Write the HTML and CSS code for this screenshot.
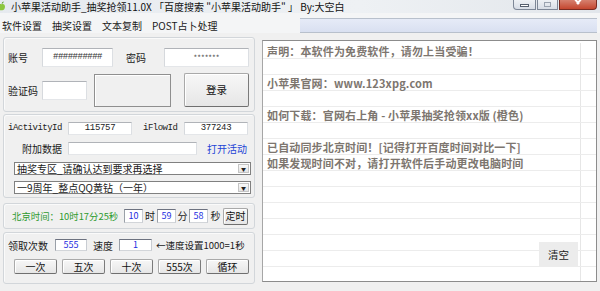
FILE: index.html
```html
<!DOCTYPE html>
<html lang="zh-CN">
<head>
  <meta charset="UTF-8">
  <title>小苹果活动助手</title>
  <link rel="stylesheet" href="styles.css">
</head>
<body>
  <!-- 标题栏 -->
  <div class="titlebar">
    <svg class="app-icon" width="7" height="10" viewBox="0 0 7 10">
      <path d="M3.5 3.2 C1.2 2.2 0 3.8 0 5.8 C0 8 1.5 9.8 3.5 9.2 C5.5 9.8 7 8 7 5.8 C7 3.8 5.8 2.2 3.5 3.2 Z" fill="#8cc63f"/>
      <path d="M3.6 3 C3.8 1.6 4.6 0.8 5.8 0.6 C5.6 1.8 4.8 2.7 3.6 3 Z" fill="#5a9e2a"/>
    </svg>
    <span class="title-text">小苹果活动助手_抽奖抢领11.0X 「百度搜索 "小苹果活动助手" 」 By:大空白</span>
    <div class="win-btns">
      <span class="win-btn btn-min"><i></i></span>
      <span class="win-btn btn-max"><i></i></span>
      <span class="win-btn btn-close">
        <svg width="10" height="6" viewBox="0 0 10 6">
          <path d="M1 -2 L6 4 M9 -2 L4 4" stroke="#fff" stroke-width="2"/>
        </svg>
      </span>
    </div>
  </div>

  <!-- 菜单 -->
  <div class="menubar">
    <span class="menu-item">软件设置</span>
    <span class="menu-item">抽奖设置</span>
    <span class="menu-item">文本复制</span>
    <span class="menu-item">POST占卜处理</span>
    <div class="menu-space"></div>
    <div class="menu-band"></div>
  </div>

  <div class="main">
    <div class="left">
      <!-- 登录 -->
      <div class="group g-login">
        <div class="row">
          <span class="lbl w34">账号</span>
          <div class="tb tb-user">##########</div>
          <span class="lbl lbl-pass">密码</span>
          <div class="tb tb-pass">*******</div>
        </div>
        <div class="row row-code">
          <span class="lbl w34">验证码</span>
          <div class="tb tb-code"></div>
          <div class="code-img"></div>
          <div class="btn btn-login">登录</div>
        </div>
      </div>

      <!-- 活动参数 -->
      <div class="group g-act">
        <div class="row h13">
          <span class="mono w60">iActivityId</span>
          <div class="tb tb-small">115757</div>
          <span class="mono lbl-flow">iFlowId</span>
          <div class="tb tb-small">377243</div>
        </div>
        <div class="row h13 mt7">
          <span class="lbl w60 right">附加数据</span>
          <div class="tb tb-extra"></div>
          <span class="link">打开活动</span>
        </div>
        <div class="combo mt7">
          <span class="combo-text">抽奖专区_请确认达到要求再选择</span>
          <span class="combo-arrow">▼</span>
        </div>
        <div class="combo mt6">
          <span class="combo-text">一9周年_整点QQ黄钻（一年）</span>
          <span class="combo-arrow">▼</span>
        </div>
      </div>

      <!-- 定时 -->
      <div class="group g-time">
        <span class="bj-time">北京时间：10时17分25秒</span>
        <div class="tb tb-num">10</div>
        <span class="unit w14">时</span>
        <div class="tb tb-num">59</div>
        <span class="unit w13">分</span>
        <div class="tb tb-num">58</div>
        <span class="unit w15">秒</span>
        <div class="btn btn-timer">定时</div>
      </div>

      <!-- 领取 -->
      <div class="group g-get">
        <div class="row h12">
          <span class="lbl w47">领取次数</span>
          <div class="tb tb-count">555</div>
          <span class="lbl w32 center">速度</span>
          <div class="tb tb-speed">1</div>
          <span class="lbl hint">←速度设置1000=1秒</span>
        </div>
        <div class="btn-row">
          <div class="btn btn-act">一次</div>
          <div class="btn btn-act">五次</div>
          <div class="btn btn-act">十次</div>
          <div class="btn btn-act">555次</div>
          <div class="btn btn-act">循环</div>
        </div>
      </div>
    </div>

    <!-- 日志 -->
    <div class="log">
      <div class="log-row"><span class="cell">声明：本软件为免费软件，请勿上当受骗！</span></div>
      <div class="log-row"><span class="cell"></span></div>
      <div class="log-row"><span class="cell">小苹果官网：www.123xpg.com</span></div>
      <div class="log-row"><span class="cell"></span></div>
      <div class="log-row"><span class="cell">如何下载：官网右上角 - 小苹果抽奖抢领xx版 (橙色)</span></div>
      <div class="log-row"><span class="cell"></span></div>
      <div class="log-row"><span class="cell">已自动同步北京时间！[记得打开百度时间对比一下]</span></div>
      <div class="log-row"><span class="cell">如果发现时间不对，请打开软件后手动更改电脑时间</span></div>
      <div class="log-row"><span class="cell"></span></div>
      <div class="log-row"><span class="cell"></span></div>
      <div class="log-row"><span class="cell"></span></div>
      <div class="log-row"><span class="cell"></span></div>
      <div class="log-row"><span class="cell"></span></div>
      <div class="log-row"><span class="cell"></span></div>
      <div class="log-row"><span class="cell"></span></div>
      <div class="clear-btn">清空</div>
    </div>
  </div>
</body>
</html>
```

FILE: styles.css
```css
* {
  box-sizing: border-box;
}

body {
  margin: 0;
  width: 600px;
  height: 291px;
  overflow: hidden;
  background: #f0f0f0;
  font-family: "Noto Sans CJK SC", "Noto Sans", sans-serif;
  font-size: 10px;
  color: #1a1a1a;
}

/* 标题栏 */
.titlebar {
  height: 13px;
  display: flex;
  align-items: flex-start;
  background: linear-gradient(to right, #e6eaef, #eef1f4 60%, #e2e6eb);
}

.app-icon {
  margin: 1px 6px 0 -2px;
}

.title-text {
  font-size: 10px;
  line-height: 13px;
  color: #111;
  white-space: nowrap;
}

.win-btns {
  margin-left: auto;
  margin-right: 3px;
  display: flex;
  gap: 1px;
}

.win-btn {
  height: 10px;
  border: 1px solid #7d8797;
  border-top: none;
  background: linear-gradient(#eef1f5, #d7dde6);
  display: flex;
  justify-content: center;
  align-items: flex-end;
}

.btn-min {
  width: 23px;
  border-radius: 0 0 0 4px;
}

.btn-min i {
  width: 9px;
  height: 3px;
  margin-bottom: 2px;
  border: 1px solid #555f6e;
  background: #fff;
}

.btn-max {
  width: 21px;
}

.btn-max i {
  width: 7px;
  height: 5px;
  margin-bottom: 2px;
  border: 1px solid #9aa3b0;
}

.btn-close {
  width: 38px;
  border-color: #7a2c22;
  border-radius: 0 0 4px 0;
  background: linear-gradient(#d6816f, #c4462f);
  align-items: flex-start;
}

/* 菜单 */
.menubar {
  height: 20px;
  display: flex;
  align-items: flex-start;
  padding-left: 2px;
  background: #f4f5f6;
}

.menu-item {
  margin-right: 10px;
  margin-top: 6px;
  font-size: 10px;
  line-height: 13px;
  white-space: nowrap;
}

.menu-space {
  flex: 1;
}

.menu-band {
  width: 297px;
  height: 15px;
  margin-top: 5px;
  margin-right: 3px;
  border-top: 1px solid #b8c0cc;
  border-bottom: 1px solid #b8c0cc;
  background: linear-gradient(#e6ebf7, #d9e0f1);
}

/* 主体 */
.main {
  display: flex;
  align-items: flex-start;
  padding: 4px 3px 0 3px;
}

.left {
  width: 252px;
}

.group {
  border: 1px solid #d2d6da;
  border-radius: 3px;
  box-shadow: inset 1px 1px #fafafa;
  padding-left: 4px;
}

.row {
  display: flex;
  align-items: center;
  height: 19px;
}

.h13 { height: 13px; }
.h12 { height: 12px; }
.mt6 { margin-top: 6px; }
.mt7 { margin-top: 7px; }

.lbl {
  font-size: 10px;
  line-height: 13px;
  white-space: nowrap;
  color: #1a1a1a;
}

.w34 { width: 34px; }
.w60 { width: 60px; }
.w47 { width: 47px; }
.w32 { width: 32px; }
.right { text-align: right; padding-right: 6px; }
.center { text-align: center; }

.mono {
  font-family: "Liberation Mono", "DejaVu Sans Mono", monospace;
  font-size: 9px;
  letter-spacing: -0.5px;
  line-height: 11px;
  color: #222;
  white-space: nowrap;
}

/* 输入框 */
.tb {
  background: #fff;
  border: 1px solid;
  border-color: #b0b3b8 #dcdfe3 #e4e6e9 #d6d9dd;
  text-align: center;
  font-size: 9px;
  line-height: 11px;
  color: #222;
  white-space: nowrap;
}

.g-login {
  height: 75px;
  padding-top: 10px;
}

.tb-user {
  width: 71px;
  height: 19px;
  line-height: 17px;
  letter-spacing: -0.5px;
  font-family: "Liberation Mono", monospace;
  color: #333;
}

.lbl-pass {
  width: 38px;
  margin-left: 13px;
}

.tb-pass {
  width: 85px;
  height: 19px;
  line-height: 17px;
  font-size: 8px;
  color: #555;
}

.row-code {
  height: 34px;
  margin-top: 6px;
}

.tb-code {
  width: 45px;
  height: 19px;
}

.code-img {
  width: 77px;
  height: 33px;
  margin-left: 7px;
  border: 1px solid #8f8f8f;
  box-shadow: inset 1px 1px #fff;
  background: #f0f0f0;
}

/* 按钮 */
.btn {
  display: flex;
  justify-content: center;
  align-items: center;
  border: 1px solid #a9a9a9;
  border-right-color: #7b7b7b;
  border-bottom-color: #6f6f6f;
  border-radius: 2px;
  background: linear-gradient(#f7f7f7, #e6e6e6);
  box-shadow: inset 1px 1px #fff;
  font-size: 10px;
  line-height: 12px;
  color: #111;
  white-space: nowrap;
}

.btn-login {
  width: 65px;
  height: 34px;
  margin-left: 13px;
  font-size: 10.5px;
}

.g-act {
  height: 84px;
  margin-top: 2px;
  padding-top: 7px;
}

.tb-small {
  width: 64px;
  height: 13px;
  font-family: "Liberation Mono", monospace;
  font-size: 9px;
  letter-spacing: -0.3px;
}

.lbl-flow {
  width: 41px;
  margin-left: 11px;
}

.tb-extra {
  width: 129px;
  height: 13px;
}

.link {
  margin-left: 10px;
  color: #1c44d6;
  font-size: 10px;
  line-height: 13px;
}

.combo {
  width: 237px;
  height: 13px;
  margin-left: 6px;
  display: flex;
  align-items: center;
  background: #fff;
  border: 1px solid #808080;
}

.combo-text {
  flex: 1;
  padding-left: 2px;
  font-size: 10px;
  line-height: 11px;
  white-space: nowrap;
}

.combo-arrow {
  width: 11px;
  height: 9px;
  margin-right: 1px;
  border: 1px solid #c4c4c4;
  background: linear-gradient(#fafafa, #e4e4e4);
  font-size: 5px;
  line-height: 7px;
  text-align: center;
  color: #222;
}

/* 定时 */
.g-time {
  height: 26px;
  margin-top: 5px;
  padding-left: 8px;
  display: flex;
  align-items: center;
}

.bj-time {
  width: 112px;
  color: #2e9a2e;
  font-size: 9.4px;
  line-height: 12px;
  white-space: nowrap;
}

.tb-num {
  width: 19px;
  height: 14px;
  line-height: 12px;
  color: #1b2ee0;
  font-size: 9px;
  border-color: #6d7280 #c8ccd2 #d2d5d9 #9aa0a8;
}

.unit {
  font-size: 10px;
  line-height: 12px;
  text-align: center;
}

.w13 { width: 13px; }
.w14 { width: 14px; }
.w15 { width: 15px; }

.btn-timer {
  width: 25px;
  height: 17px;
}

/* 领取 */
.g-get {
  height: 52px;
  margin-top: 3px;
  padding-top: 6px;
}

.tb-count,
.tb-speed {
  height: 12px;
  line-height: 10px;
  color: #1b2ee0;
  font-size: 9px;
  border-color: #6d7280 #c8ccd2 #d2d5d9 #9aa0a8;
}

.tb-count { width: 32px; }
.tb-speed { width: 33px; }

.hint {
  margin-left: 4px;
  font-size: 9.5px;
}

.btn-row {
  display: flex;
  gap: 5px;
  margin-top: 8px;
  margin-left: 6px;
}

.btn-act {
  width: 43px;
  height: 15px;
}

/* 日志 */
.log {
  position: relative;
  width: 335px;
  height: 242px;
  margin-top: 3px;
  margin-left: 7px;
  padding-top: 2px;
  overflow: hidden;
  background: #fff;
  border: 1px solid #8c8c8c;
  border-left-color: #a6a6a6;
}

.log-row {
  display: flex;
  height: 16px;
  border-bottom: 1px solid #ececec;
}

.cell {
  width: 318px;
  padding-left: 4px;
  border-right: 1px solid #e6e6e6;
  font-size: 11px;
  font-weight: 600;
  line-height: 16px;
  letter-spacing: 0.15px;
  color: #7d766f;
  white-space: nowrap;
}

.clear-btn {
  position: absolute;
  right: 18px;
  bottom: 14px;
  width: 39px;
  height: 25px;
  display: flex;
  justify-content: center;
  align-items: center;
  background: #ececec;
  font-size: 10.5px;
  color: #222;
}
```
